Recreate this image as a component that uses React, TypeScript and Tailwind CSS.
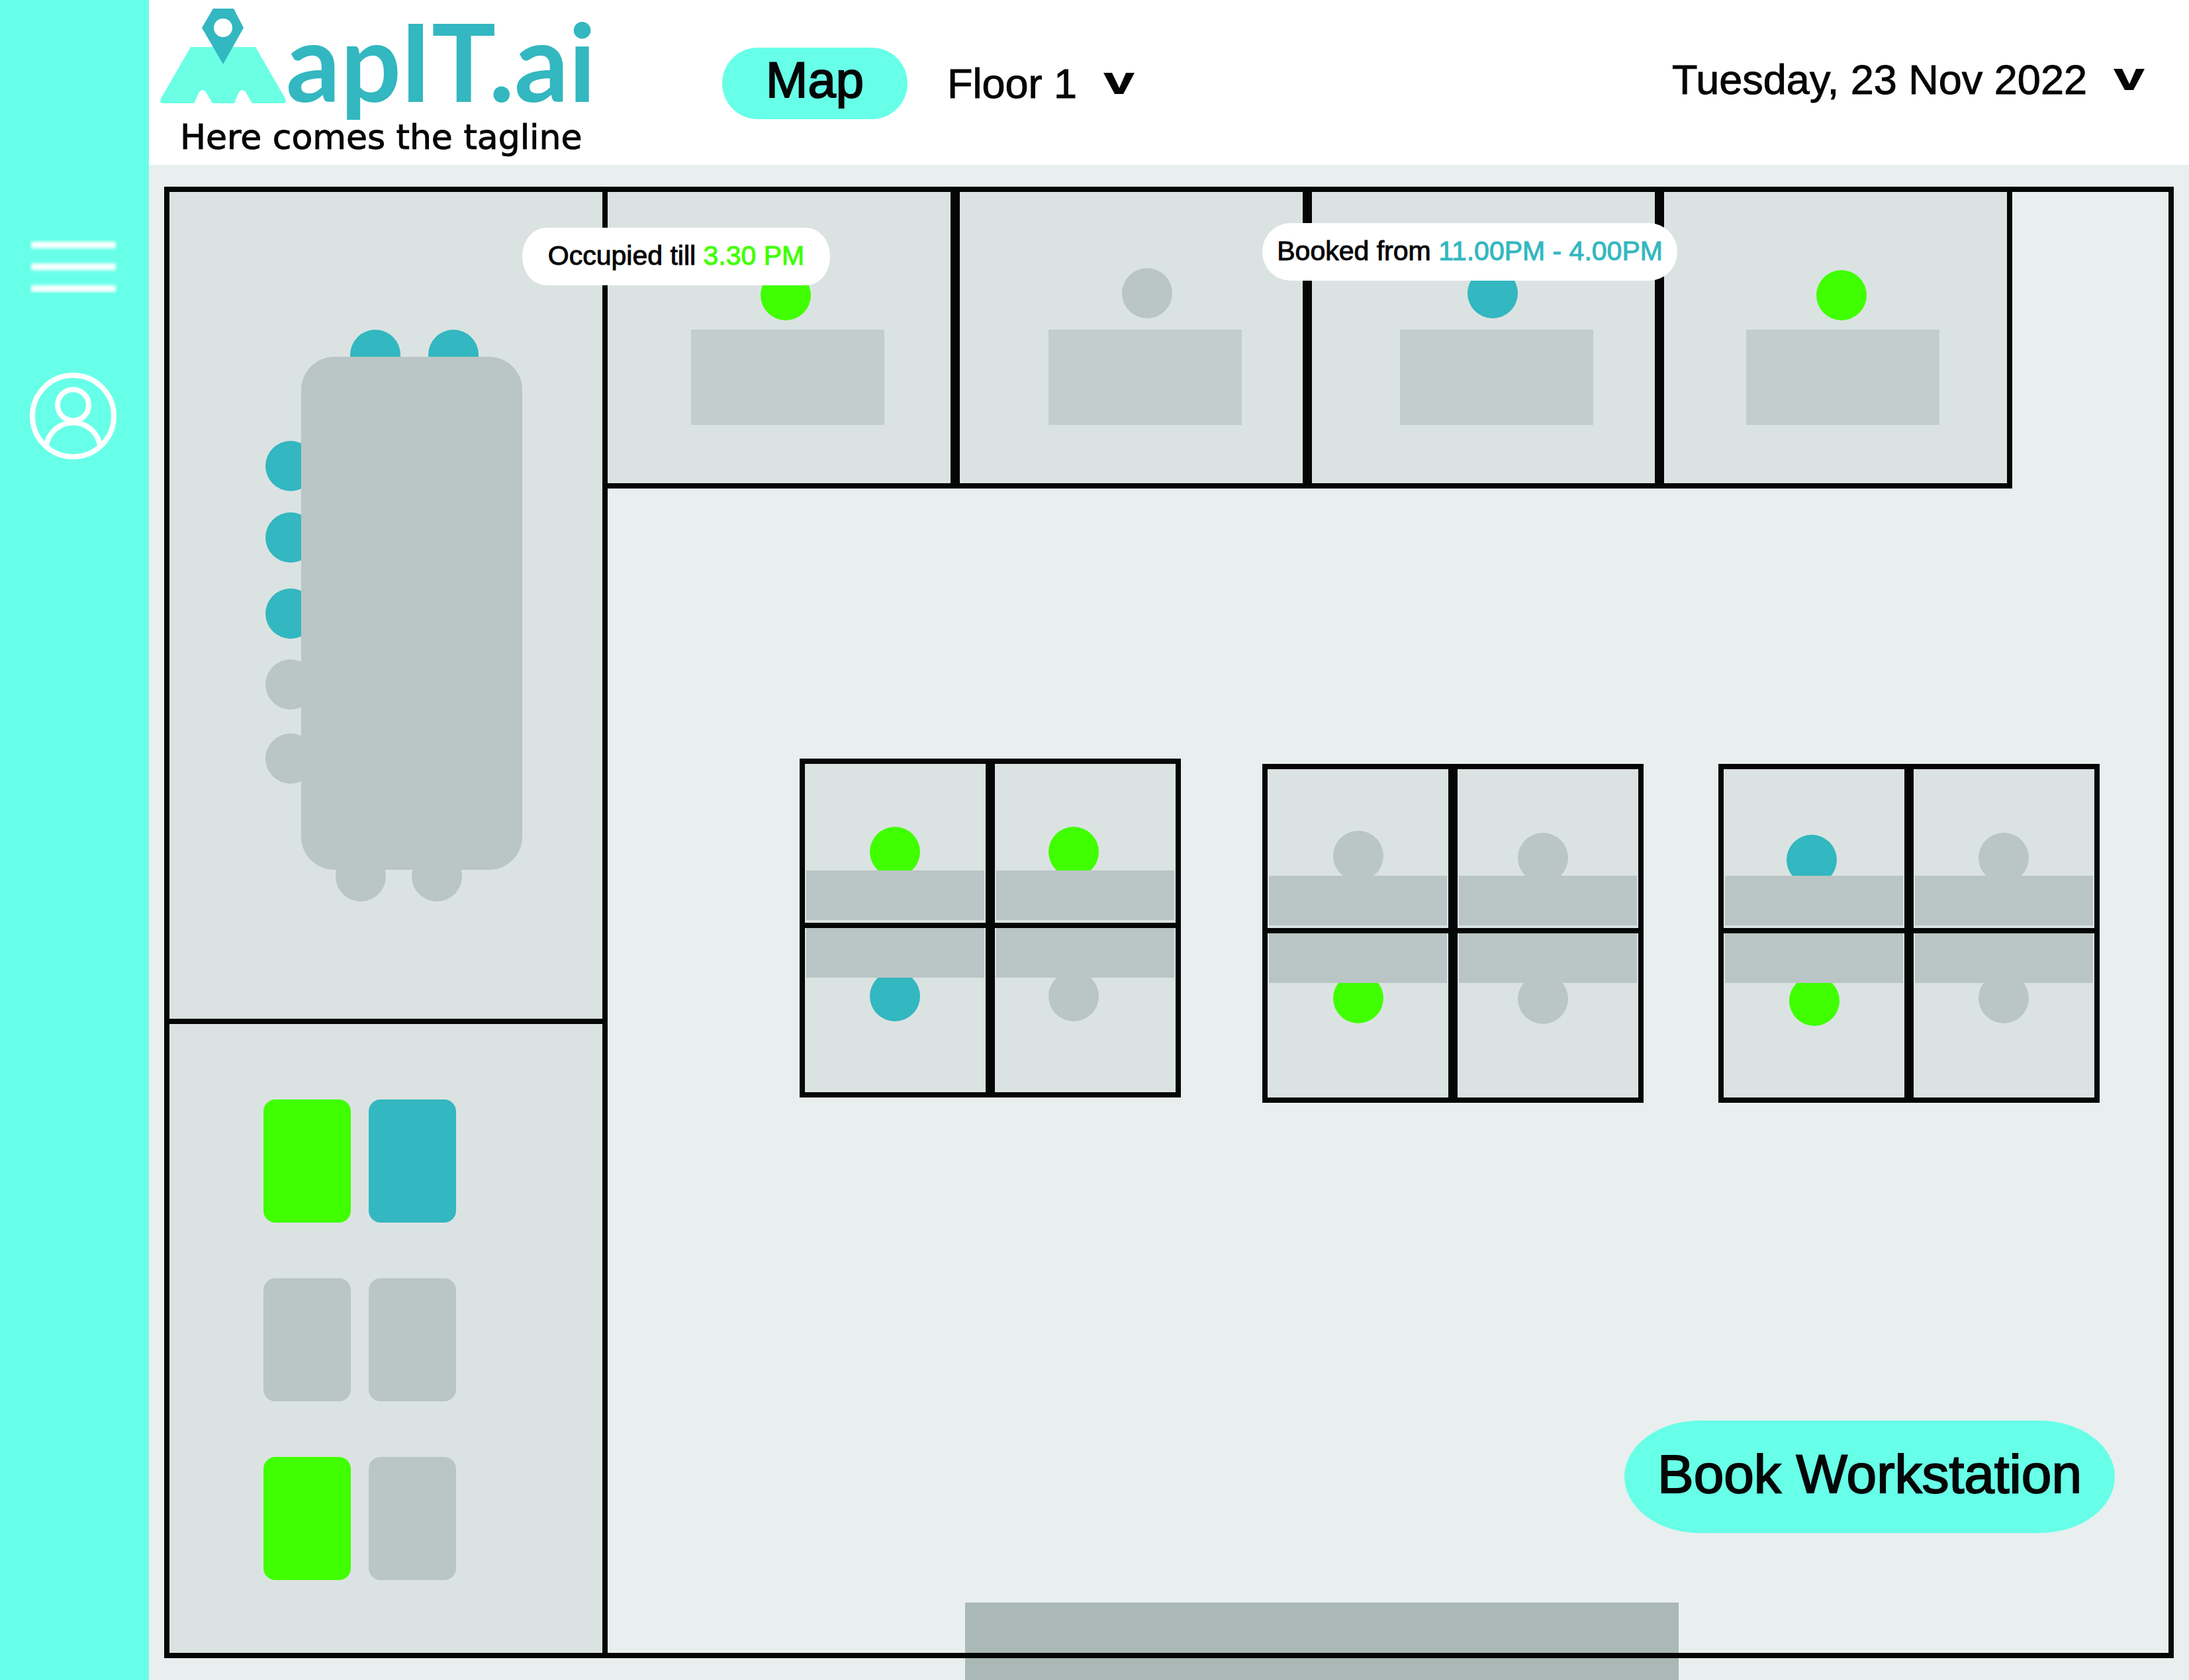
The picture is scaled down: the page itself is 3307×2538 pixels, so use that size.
import React from "react";

type Status = "free" | "occupied" | "booked";

const statusColor: Record<Status, string> = {
  free: "bg-[#bac5c5]",
  occupied: "bg-[#40ff00]",
  booked: "bg-[#33b7c0]",
};

function Seat({ status, at, label }: { status: Status; at: string; label: string }) {
  return (
    <button
      type="button"
      aria-label={`${label}, ${status}`}
      className={`absolute size-[76px] rounded-full ${statusColor[status]} ${at}`}
    />
  );
}

function Caret() {
  return (
    <svg viewBox="0 0 47 32" className="pointer-events-none h-8 w-[47px]" aria-hidden="true">
      <path d="M0 0H13L24 23L34 0H47L30 32H17Z" fill="#050606" />
    </svg>
  );
}

function Picker({ id, label, options }: { id: string; label: string; options: string[] }) {
  return (
    <div className="flex items-center gap-9">
      <label htmlFor={id} className="sr-only">
        {label}
      </label>
      <select
        id={id}
        className="field-sizing-content h-24 appearance-none bg-transparent px-1 text-[63px] leading-[80px] [-webkit-text-stroke:1px_#050606]"
      >
        {options.map((o) => (
          <option key={o}>{o}</option>
        ))}
      </select>
      <Caret />
    </div>
  );
}

function Logo() {
  return (
    <a href="#" className="block w-[849px] shrink-0 pt-3 pb-[7px]">
      <div className="flex items-start">
        <svg viewBox="0 0 190 144" className="h-36 w-[190px] shrink-0" aria-hidden="true">
          <path
            d="M46 59H144L189 137Q192 144 185 144H139L129 127Q124 121 119 127L112 144H79L69 127Q64 121 59 127L51 144H5Q-2 144 1 137Z"
            fill="#6bffe4"
          />
          <path d="M80 1H111L126 30L95 85L63 30Z" fill="#33b7c0" />
          <circle cx="95" cy="30" r="14" fill="#fff" />
        </svg>
        <span className="font-[Lato,sans-serif] text-[162px] leading-[160px] font-bold whitespace-nowrap text-[#33b7c0]">
          apIT.ai
        </span>
      </div>
      <p className="pl-[30px] font-['DejaVu_Sans',sans-serif] text-[52px] leading-[70px] whitespace-nowrap [-webkit-text-stroke:1px_#050606]">
        Here comes the tagline
      </p>
    </a>
  );
}

function Sidebar() {
  return (
    <nav className="flex w-[225px] shrink-0 flex-col items-start gap-[120px] bg-[#67ffe8] pt-[363px] pl-[45px]">
      <button type="button" aria-label="Menu">
        <svg viewBox="0 0 132 80" className="block h-20 w-[132px]" aria-hidden="true">
          <filter id="soft" x="-10%" y="-80%" width="120%" height="260%">
            <feGaussianBlur stdDeviation="2.4" />
          </filter>
          {[2, 35, 68].map((y) => (
            <rect key={y} x="2" y={y} width="128" height="10" fill="#fff" filter="url(#soft)" />
          ))}
        </svg>
      </button>
      <button type="button" aria-label="Profile">
        <svg
          viewBox="0 0 131 131"
          className="block size-[131px]"
          fill="none"
          stroke="#fff"
          strokeWidth="8"
          aria-hidden="true"
        >
          <circle cx="65.5" cy="65.5" r="61.5" />
          <circle cx="65.5" cy="49" r="23.5" />
          <path d="M25 110A41 41 0 0 1 106 110" />
        </svg>
      </button>
    </nav>
  );
}

const meetingSeats: { status: Status; at: string }[] = [
  { status: "booked", at: "left-[273px] top-[208px]" },
  { status: "booked", at: "left-[391px] top-[208px]" },
  { status: "booked", at: "left-[145px] top-[376px]" },
  { status: "booked", at: "left-[145px] top-[484px]" },
  { status: "booked", at: "left-[145px] top-[599px]" },
  { status: "free", at: "left-[145px] top-[706px]" },
  { status: "free", at: "left-[145px] top-[818px]" },
  { status: "free", at: "left-[251px] top-[996px]" },
  { status: "free", at: "left-[366px] top-[996px]" },
];

const lounge: Status[] = ["occupied", "booked", "free", "free", "occupied", "free"];

const offices: { status: Status; seat: string; desk: string }[] = [
  { status: "occupied", seat: "left-[231px] top-[118px]", desk: "left-[126px]" },
  { status: "free", seat: "left-[245px] top-[115px]", desk: "left-[134px]" },
  { status: "booked", seat: "left-[235px] top-[115px]", desk: "left-[133px]" },
  { status: "occupied", seat: "left-[230px] top-[118px]", desk: "left-[124px]" },
];

const pods: { place: string; seats: { status: Status; at: string }[] }[] = [
  {
    place: "",
    seats: [
      { status: "occupied", at: "left-[98px] top-[95px]" },
      { status: "occupied", at: "left-[81px] top-[95px]" },
      { status: "booked", at: "left-[98px] top-[65px]" },
      { status: "free", at: "left-[81px] top-[65px]" },
    ],
  },
  {
    place: "mt-2 ml-[123px]",
    seats: [
      { status: "free", at: "left-[99px] top-[93px]" },
      { status: "free", at: "left-[91px] top-[96px]" },
      { status: "occupied", at: "left-[99px] top-[60px]" },
      { status: "free", at: "left-[91px] top-[61px]" },
    ],
  },
  {
    place: "mt-2 ml-[113px]",
    seats: [
      { status: "booked", at: "left-[95px] top-[99px]" },
      { status: "free", at: "left-[98px] top-[96px]" },
      { status: "occupied", at: "left-[99px] top-[64px]" },
      { status: "free", at: "left-[98px] top-[60px]" },
    ],
  },
];

function Tooltip({ shape, text, time, color }: { shape: string; text: string; time: string; color: string }) {
  return (
    <div
      role="tooltip"
      className={`absolute z-10 flex h-[87px] items-center justify-center bg-white pb-1 text-[41px] leading-[56px] whitespace-nowrap ${shape}`}
    >
      <span className="[-webkit-text-stroke:1px_#050606]">{text}&nbsp;</span>
      <span className={color}>{time}</span>
    </div>
  );
}

function Pod({ index, place, seats }: { index: number; place: string; seats: { status: Status; at: string }[] }) {
  return (
    <div
      className={`grid w-[576px] shrink-0 grid-cols-2 grid-rows-[240px_248px] gap-x-[14px] gap-y-2 border-8 border-[#050606] bg-[#050606] ${place}`}
    >
      {seats.map((s, i) => (
        <div key={i} className="relative bg-[#dbe3e2]">
          <Seat status={s.status} at={s.at} label={`Pod ${index + 1} seat ${i + 1}`} />
          <div className={`absolute inset-x-[2px] h-[75px] bg-[#bac5c5] ${i < 2 ? "bottom-1" : "top-0"}`} />
        </div>
      ))}
    </div>
  );
}

function FloorPlan() {
  return (
    <section aria-label="Floor plan" className="relative flex flex-1 border-8 border-[#050606]">
      <div className="flex w-[662px] shrink-0 flex-col border-r-8 border-[#050606] bg-[#dbe3e2]">
        <div className="relative h-[1257px] border-b-8 border-[#050606]">
          {meetingSeats.map((s, i) => (
            <Seat key={i} status={s.status} at={s.at} label={`Meeting seat ${i + 1}`} />
          ))}
          <div className="absolute top-[249px] left-[199px] h-[775px] w-[334px] rounded-[50px] bg-[#bac5c5]" />
        </div>
        <div className="grid grid-cols-[132px_132px] gap-x-[27px] gap-y-[84px] pt-[114px] pl-[142px]">
          {lounge.map((s, i) => (
            <button
              key={i}
              type="button"
              aria-label={`Lounge seat ${i + 1}, ${s}`}
              className={`h-[186px] rounded-[18px] ${statusColor[s]}`}
            />
          ))}
        </div>
      </div>
      <div className="flex flex-1 flex-col">
        <div className="grid h-[448px] w-9/10 grid-cols-4 gap-x-[14px] border-r-8 border-b-8 border-[#050606] bg-[#050606]">
          {offices.map((o, i) => (
            <div key={i} className="relative bg-[#dbe3e2]">
              <Seat status={o.status} at={o.seat} label={`Office ${i + 1}`} />
              <div className={`absolute top-[208px] h-36 w-[292px] bg-[#c3cecc] ${o.desk}`} />
              {i === 0 && (
                <Tooltip
                  shape="top-[54px] left-[-129px] w-[465px] rounded-[36px/43px]"
                  text="Occupied till"
                  time="3.30 PM"
                  color="text-[#40ff00] [-webkit-text-stroke:1px_#40ff00]"
                />
              )}
              {i === 2 && (
                <Tooltip
                  shape="top-[47px] left-[-75px] w-[627px] rounded-[43px]"
                  text="Booked from"
                  time="11.00PM - 4.00PM"
                  color="text-[#33b7c0] [-webkit-text-stroke:1px_#33b7c0]"
                />
              )}
            </div>
          ))}
        </div>
        <div className="flex items-start pt-[408px] pl-[290px]">
          {pods.map((p, i) => (
            <Pod key={i} index={i} place={p.place} seats={p.seats} />
          ))}
        </div>
        <button
          type="button"
          className="mt-auto mr-[81px] mb-[181px] h-[170px] w-[741px] self-end rounded-[114px/85px] bg-[#67ffe8] pb-2 text-[82px] leading-[100px] whitespace-nowrap [-webkit-text-stroke:2px_#050606]"
        >
          Book Workstation
        </button>
      </div>
    </section>
  );
}

export default function App() {
  return (
    <div className="flex min-h-screen bg-[#e9efef] font-['Liberation_Sans',Arial,sans-serif] text-[#050606]">
      <Sidebar />
      <div className="flex flex-1 flex-col">
        <header className="flex items-start bg-white pl-[17px]">
          <Logo />
          <div className="flex flex-1 items-start pt-[72px] pr-[67px]">
            <button
              type="button"
              className="h-[108px] w-[280px] rounded-full bg-[#67ffe8] pb-[10px] text-[76px] leading-[88px] [-webkit-text-stroke:2px_#050606]"
            >
              Map
            </button>
            <div className="flex h-[108px] items-center pl-14">
              <Picker id="floor" label="Floor" options={["Floor 1"]} />
            </div>
            <div className="ml-auto flex h-24 items-center">
              <Picker id="date" label="Date" options={["Tuesday, 23 Nov 2022"]} />
            </div>
          </div>
        </header>
        <main className="relative flex flex-1 flex-col px-[23px] py-[33px]">
          <div className="absolute bottom-0 left-[40%] h-[117px] w-[35%] bg-[#aab8b6]" />
          <FloorPlan />
        </main>
      </div>
    </div>
  );
}
